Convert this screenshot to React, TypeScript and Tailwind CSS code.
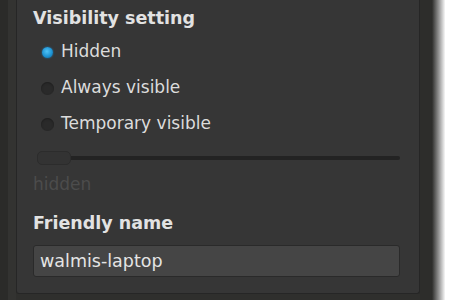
import React from "react";

const options = ["Hidden", "Always visible", "Temporary visible"];

const Radio = ({ checked }: { checked: boolean }) =>
  checked ? (
    <span className="w-[11px] h-[11px] rounded-full bg-[radial-gradient(circle_at_45%_40%,#4fc3f7,#1a8fd0_60%,#155f8a)] shadow-[0_0_2px_#1a7ab8]" />
  ) : (
    <span className="w-[13px] h-[13px] rounded-full bg-[#2a2a2a] shadow-[inset_0_1px_2px_#1e1e1e]" />
  );

export default function App() {
  const [selected, setSelected] = React.useState(0);
  const [name, setName] = React.useState("walmis-laptop");

  return (
    <div
      className="w-[450px] h-[300px] flex bg-[#2f2f2d] overflow-hidden"
      style={{ fontFamily: '"DejaVu Sans", sans-serif' }}
    >
      {/* outer window frame */}
      <div className="w-[8px] bg-[#2b2b29]" />
      <div className="w-[8px] bg-[#333331]" />
      <div className="w-[404px] h-[294px] border border-[#262626] border-t-0 rounded-b-[3px] bg-[#363636] pl-[16px] pr-[19px] pt-[7px]">
        <h2 className="text-[17.5px] font-bold text-[#e2e2e2] leading-[22px]">Visibility setting</h2>

        <div className="mt-[5px] flex flex-col">
          {options.map((opt, i) => (
            <label
              key={opt}
              onClick={() => setSelected(i)}
              className="h-[36px] flex items-center cursor-pointer"
            >
              <span className="w-[28px] flex justify-center">
                <Radio checked={selected === i} />
              </span>
              <span className="text-[17px] text-[#dcdcdc]">{opt}</span>
            </label>
          ))}
        </div>

        {/* slider */}
        <div className="mt-[9px] h-[14px] flex items-center relative pl-[4px]">
          <div className="h-[4px] flex-1 rounded-full bg-[#232323]" />
          <div className="absolute left-[4px] top-0 w-[34px] h-[14px] rounded-[5px] bg-[#333333] border border-[#2c2c2c]" />
        </div>
        <div className="mt-[9px] text-[17px] text-[#4c4c4c] leading-[20px]">hidden</div>

        <h2 className="mt-[18px] text-[17.5px] font-bold text-[#e2e2e2] leading-[22px]">Friendly name</h2>
        <input
          value={name}
          onChange={(e) => setName(e.target.value)}
          className="mt-[11px] w-[367px] h-[32px] rounded-[3px] bg-[#454545] border border-[#2a2a2a] px-[6px] text-[17.5px] text-[#e4e4e4] outline-none"
          style={{ fontFamily: '"DejaVu Sans", sans-serif' }}
        />
      </div>
      <div className="w-[12px] bg-[#2d2d2b]" />
      <div className="flex-1 bg-[linear-gradient(to_right,#2d2d2b,#9a9a9a_40%,#ffffff_75%)]" />
    </div>
  );
}
